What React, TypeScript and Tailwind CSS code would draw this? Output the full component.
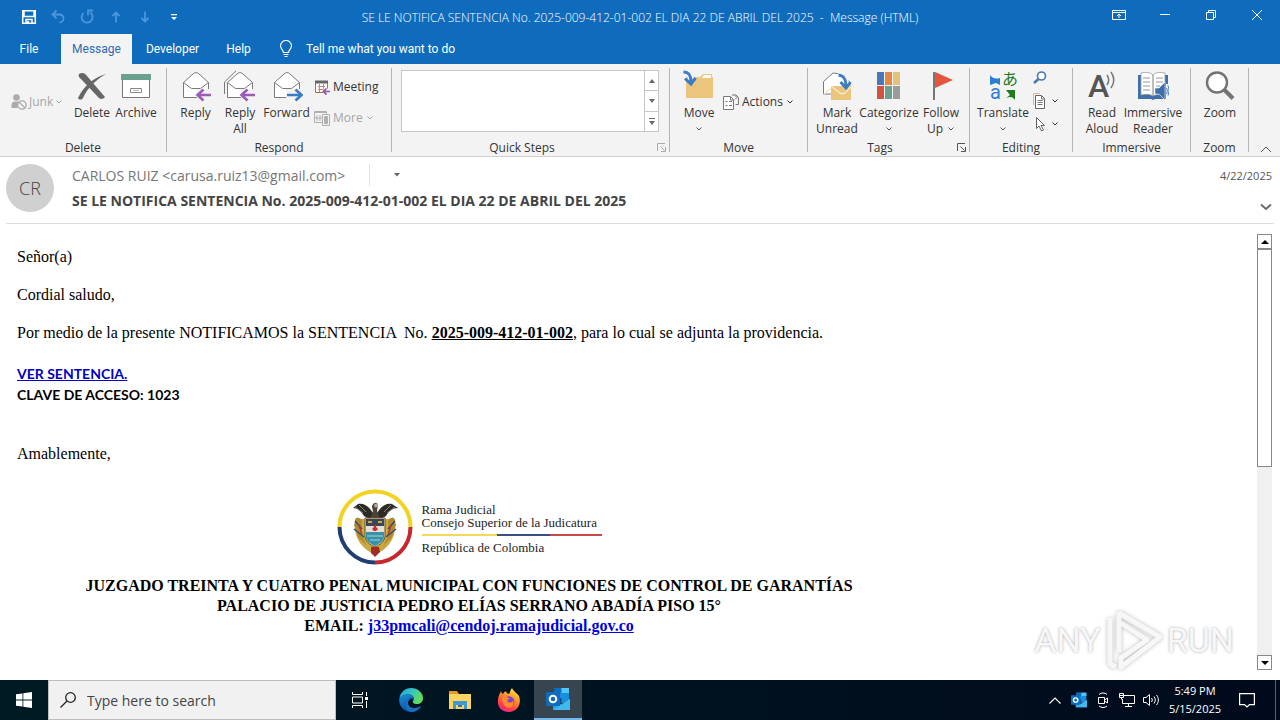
import type { ReactNode } from "react";

function ChevronDown({ className = "h-[6px] w-[8px]" }: { className?: string }) {
  return (
    <svg viewBox="0 0 8 6" className={className} fill="none" stroke="currentColor">
      <path d="M1.5 1.5 4 4l2.5-2.5" />
    </svg>
  );
}

function EnvelopeArrow({ kind }: { kind: "reply" | "replyAll" | "forward" }) {
  return (
    <svg viewBox="0 0 32 32" className="size-8" fill="none">
      {kind === "replyAll" && <path d="M.5 24V12L12 .8" stroke="#7a7a7a" />}
      <path d="M3.500 12.500 13 4c2-1.800 4-1.800 6 0l9.500 8.500v15h-25z" fill="#fff" stroke="#7a7a7a" />
      <path d="m3.500 12.500 8 6h9l8-6" stroke="#7a7a7a" />
      {kind === "forward" ? (
        <>
          <path d="M15 19h18v13H15z" fill="#f3f3f3" />
          <path d="M16 25h14M24.500 19.500l6 5.500-6 5.500" stroke="#3b7cc4" strokeWidth="2.600" />
        </>
      ) : (
        <>
          <path d="M17 19h15v13H17z" fill="#f3f3f3" />
          <path d="M31 25H18M23.500 19.500l-6 5.500 6 5.500" stroke="#9a5cb8" strokeWidth="2.600" />
        </>
      )}
    </svg>
  );
}

function DeleteIcon() {
  return (
    <svg viewBox="0 0 32 32" className="size-8" fill="#666">
      <path d="M3 4c3-2 6-1 8 2l18 21c-2 2.500-5 2.500-7 0L5 9C3 8 2 5 3 4z" />
      <path d="M30 4C21 9 12 17 7 28c-1 2-4 2-5 0C7 17 18 7 30 4z" />
    </svg>
  );
}

function ArchiveIcon() {
  return (
    <svg viewBox="0 0 32 32" className="size-8" fill="none">
      <path d="M2.500 9.500h27v18h-27z" fill="#fff" stroke="#777" />
      <path d="M1 4h30v6H1z" fill="#6ba08f" />
      <path d="M10.500 18.500h11v4h-11z" stroke="#888" />
      <path d="M13 20.500h6" stroke="#bbb" />
    </svg>
  );
}

function JunkIcon() {
  return (
    <svg viewBox="0 0 16 16" className="size-4" fill="#ababab">
      <circle cx="5.500" cy="3.500" r="3.300" />
      <path d="M.5 14V11c0-2 1.500-3.500 3.500-3.500h3L6.500 14z" />
      <circle cx="11" cy="11" r="4.200" fill="#f3f3f3" stroke="#ababab" strokeWidth="1.300" />
      <path d="m8 8 6 6" stroke="#ababab" strokeWidth="1.300" />
    </svg>
  );
}

function MeetingIcon() {
  return (
    <svg viewBox="0 0 16 16" className="size-4" fill="none">
      <path d="M1.500 3.500h12v10h-12z" fill="#fff" stroke="#b56c3c" />
      <path d="M1 1.500h13v3H1z" fill="#666" />
      <path d="M4 7.500h7M4 10.500h7M5.500 5v8M9.500 5v8" stroke="#c88a62" />
      <path d="M9.500 9.500H16V16H9.500z" fill="#f3f3f3" />
      <path d="M16 12.500H9.500m3-3-3 3 3 3" stroke="#8e55b0" strokeWidth="1.700" />
    </svg>
  );
}

function MoreIcon() {
  return (
    <svg viewBox="0 0 16 16" className="size-4" fill="none" stroke="#b0b0b0">
      <path d="M.5 2.500h12M.5 1.500h12v11H.5zM3 5v6M6 5v6M1 8h8" />
      <path d="M8.500 4.500h7v11h-7z" fill="#f3f3f3" />
      <path d="M10.500 6.500h3v7h-3z" fill="#b0b0b0" />
    </svg>
  );
}

function MoveIcon() {
  return (
    <svg viewBox="0 0 32 32" className="size-8" fill="none">
      <path d="M3 7h14l3-3h9v3h1v21H3z" fill="#eac57b" />
      <path d="m19 8 2-3h7v3z" fill="#fff" />
      <path d="M1.500 1.500C6 2 8.500 5 8.500 13" stroke="#f3f3f3" strokeWidth="6" />
      <path d="M.5 2C6 2 8 5 8 13M2 8.500l6 5.500 4.500-6" stroke="#3b7cc4" strokeWidth="3" />
    </svg>
  );
}

function ActionsIcon() {
  return (
    <svg viewBox="0 0 16 16" className="size-4" fill="none" stroke="#777">
      <path d="M.5 2.500h7l3 3v10H.5z" fill="#fff" />
      <path d="M2.500 7.500h2M6 7.500h3M2.500 11.500h2M6 11.500h3M9 1h4l2.500 2.500v7h-3M7.500 3v3h3" />
      <path d="M12 5.500 14 3.500 12 1.500" />
    </svg>
  );
}

function MarkUnreadIcon() {
  return (
    <svg viewBox="0 0 32 32" className="size-8" fill="none">
      <path d="M2.500 11.500 12 3l8 1 9 8v12h-26.500z" fill="#fff" stroke="#7a7a7a" />
      <path d="M10 16h20v14H10z" fill="#eac57b" />
      <path d="m3 24 7-6M10 16l9 7c2 1 3 1 5 0l6-6" stroke="#f7e7c6" strokeWidth="1.500" />
      <path d="M17 4c6 0 8 5 8 12" stroke="#f3f3f3" strokeWidth="6" />
      <path d="M17.500 5C23 5.500 25 9 25 17M19.500 12l5.500 6 4.500-6" stroke="#3b7cc4" strokeWidth="2.800" />
    </svg>
  );
}

const categoryColors = ["#4a78b4", "#e28a45", "#e5c27a", "#d05340", "#6ba08f", "#9b9b9b"];

function CategorizeIcon() {
  return (
    <svg viewBox="0 0 32 32" className="size-8">
      {categoryColors.map((color, i) => (
        <rect key={color} x={4 + (i % 3) * 8} y={i < 3 ? 2 : 16} width="7" height="13" fill={color} />
      ))}
    </svg>
  );
}

function FlagIcon() {
  return (
    <svg viewBox="0 0 32 32" className="size-8">
      <path d="M8 2h2v28H8z" fill="#777" />
      <path d="M10 2 28 10 10 18z" fill="#e4573d" />
    </svg>
  );
}

function TranslateIcon() {
  return (
    <div className="relative size-8">
      <svg viewBox="0 0 32 32" className="size-8">
        <path d="M3 5c3 4 6 4 10 3v7l-4-2-6 2z" fill="#2b7cd3" />
        <path d="M19 20h9v10c-2-3-5-4-9-2l4-3z" fill="#1e7b1e" />
      </svg>
      <span className="absolute right-[1px] top-0 font-['Noto_Sans_CJK_JP',sans-serif] text-[16px] leading-[16px] text-[#1e7b1e]">あ</span>
      <span className="absolute bottom-0 left-[3px] font-['Roboto',sans-serif] text-[20px] leading-[20px] text-[#2b7cd3]">a</span>
    </div>
  );
}

function ReadAloudIcon() {
  return (
    <div className="relative size-8">
      <span className="absolute left-[2px] top-0 font-['Roboto',sans-serif] text-[32px] font-medium leading-[32px] text-[#555]">A</span>
      <svg viewBox="0 0 32 32" className="absolute inset-0 size-8" fill="none" stroke="#777" strokeWidth="1.500">
        <path d="M21 5c2 3 2 7 0 10M25 2c3.500 5 3.500 11 0 16" />
      </svg>
    </div>
  );
}

function ImmersiveReaderIcon() {
  return (
    <svg viewBox="0 0 32 32" className="size-8" fill="none">
      <path d="M1 5h30v24H18l-2 1-2-1H1z" fill="#3f6fa8" />
      <path d="M4 3c5-1 9-1 12 2v21c-3-2-8-2-12-1zM28 3c-5-1-9-1-12 2v21c3-2 8-2 12-1z" fill="#fff" stroke="#999" strokeWidth=".8" />
      <path d="M6 8h7M6 12h7M6 16h7M6 20h7M19 8h7M19 12h7M19 16h4" stroke="#999" />
      <path d="M29 14h3v16h-3z" fill="#f3f3f3" />
      <path d="M18 18h4l6-6v18l-6-6h-4z" fill="#3f6fa8" stroke="#f3f3f3" strokeWidth=".6" />
      <path d="M29.500 18c1 2 1 4 0 6M31 15.500c1.300 3 1.300 7 0 10" stroke="#3b7cc4" />
    </svg>
  );
}

function ZoomIcon() {
  return (
    <svg viewBox="0 0 32 32" className="size-8" fill="none" stroke="#737373">
      <circle cx="13" cy="12.500" r="10" fill="#fff" strokeWidth="2.400" />
      <path d="m20 19.500 9 9" strokeWidth="4" />
    </svg>
  );
}

function RibbonButton({ icon, lines, width, dropdown }: { icon: ReactNode; lines: string[]; width: string; dropdown?: boolean }) {
  return (
    <button className={`flex h-[70px] shrink-0 flex-col items-center ${width}`}>
      {icon}
      <span className="mt-[3px] flex flex-col items-center whitespace-nowrap">
        {lines.map((line, i) => (
          <span key={line} className="flex h-4 items-center gap-1">
            {line}
            {dropdown && i === 1 && <ChevronDown className="h-[6px] w-[8px] text-[#555]" />}
          </span>
        ))}
        {dropdown && lines.length === 1 && (
          <span className="flex h-4 items-center">
            <ChevronDown className="h-[6px] w-[8px] text-[#555]" />
          </span>
        )}
      </span>
    </button>
  );
}

interface RibbonGroupProps {
  label: string;
  width: string;
  inset?: string;
  launcher?: boolean;
  faint?: boolean;
  children: ReactNode;
}

function RibbonGroup({ label, width, inset = "", launcher, faint, children }: RibbonGroupProps) {
  return (
    <section className={`relative my-1 flex shrink-0 flex-col border-r border-[#b5b5b5] ${width}`}>
      <div className={`flex h-[72px] shrink-0 pt-[2px] ${inset}`}>{children}</div>
      <div className={`flex h-4 shrink-0 items-center justify-center ${launcher ? "pr-[17px]" : ""}`}>{label}</div>
      {launcher && (
        <button aria-label={`${label} options`} className={`absolute bottom-0 right-[3px] ${faint ? "text-[#aaa]" : "text-[#555]"}`}>
          <svg viewBox="0 0 9 9" className="size-[9px]" fill="none" stroke="currentColor">
            <path d="M.5 8V.5H8M3.500 3.500l4 4M8.500 4v4.500H4" />
          </svg>
        </button>
      )}
    </section>
  );
}

function TitleBar() {
  return (
    <div className="grid h-[34px] grid-cols-[1fr_auto_1fr] items-center">
      <div className="flex items-center gap-[13px] pl-[21px] text-[#4b96dc]">
        <button aria-label="Save" className="text-white">
          <svg viewBox="0 0 16 16" className="size-4" fill="none" stroke="currentColor" strokeWidth="1.500">
            <path d="M1.700 1.700h12.600v12.600H1.700zM3 2v5.500h10V2" />
            <path d="M5 14v-3.500h6V14" />
            <path d="M6 12h2v3H6z" fill="currentColor" stroke="none" />
          </svg>
        </button>
        <button aria-label="Undo">
          <svg viewBox="0 0 16 16" className="size-4" fill="none" stroke="currentColor" strokeWidth="1.800">
            <path d="M6.500 1.500 2.500 5.500l4 4M3 5.500h6c3 0 4.500 2 4.500 4s-1.500 4-4 4" />
          </svg>
        </button>
        <button aria-label="Redo">
          <svg viewBox="0 0 16 16" className="size-4" fill="none" stroke="currentColor" strokeWidth="1.800">
            <path d="M11 3.500A5.500 5.500 0 1 1 4.500 4M9 6.500V1.500h5" />
          </svg>
        </button>
        <button aria-label="Previous item">
          <svg viewBox="0 0 16 16" className="size-4" fill="none" stroke="currentColor" strokeWidth="1.800">
            <path d="M8 13.500V3.500M4.500 7 8 3.500 11.500 7" />
          </svg>
        </button>
        <button aria-label="Next item">
          <svg viewBox="0 0 16 16" className="size-4" fill="none" stroke="currentColor" strokeWidth="1.800">
            <path d="M8 2.500v10M4.500 9 8 12.500 11.500 9" />
          </svg>
        </button>
        <button aria-label="Customize toolbar" className="text-white">
          <svg viewBox="0 0 16 16" className="size-4" fill="currentColor">
            <path d="M5 5h6v1.200H5zM5 8h6l-3 3z" />
          </svg>
        </button>
      </div>
      <h1 className="whitespace-pre pt-[2px] font-['Open_Sans',sans-serif] text-[12px] font-light text-white">
        SE LE NOTIFICA SENTENCIA No. 2025-009-412-01-002 EL DIA 22 DE ABRIL DEL 2025  -  Message (HTML)
      </h1>
      <div className="flex justify-end pb-[4px]">
        <button aria-label="Ribbon display options" className="flex h-7 w-[46px] items-center justify-center">
          <svg viewBox="0 0 14 12" className="h-3 w-[14px]" fill="none" stroke="currentColor">
            <path d="M.5 1.500h13v9H.5zM.5 3.500h13M7 9V5M5 7l2-2 2 2" />
          </svg>
        </button>
        <button aria-label="Minimize" className="flex h-7 w-[46px] items-center justify-center">
          <svg viewBox="0 0 10 10" className="size-[10px]" stroke="currentColor">
            <path d="M0 4.500h10" />
          </svg>
        </button>
        <button aria-label="Restore" className="flex h-7 w-[46px] items-center justify-center">
          <svg viewBox="0 0 10 10" className="size-[10px]" fill="none" stroke="currentColor">
            <path d="M.5 2.500h7v7h-7zM2.500 2.500v-2h7v7h-2" />
          </svg>
        </button>
        <button aria-label="Close" className="flex h-7 w-[46px] items-center justify-center">
          <svg viewBox="0 0 10 10" className="size-[10px]" stroke="currentColor">
            <path d="m0 0 10 10M10 0 0 10" />
          </svg>
        </button>
      </div>
    </div>
  );
}

function TabBar() {
  return (
    <nav className="flex h-[30px] items-stretch">
      <button className="w-[58px]">File</button>
      <button className="ml-[3px] w-[71px] bg-[#f3f3f3] text-[#2b6cb5]">Message</button>
      <button className="w-[81px]">Developer</button>
      <button className="w-[51px]">Help</button>
      <label className="ml-[15px] flex flex-1 items-center gap-[13px]">
        <svg viewBox="0 0 14 18" className="h-[18px] w-[14px]" fill="none" stroke="currentColor" strokeWidth="1.200">
          <path d="M4.500 12.500c0-2.500-3-3.500-3-6.500a5.500 5.500 0 0 1 11 0c0 3-3 4-3 6.500zM4.500 14.500h5M5.500 16.500h3" />
        </svg>
        <input aria-label="Tell me what you want to do" placeholder="Tell me what you want to do" className="w-60 bg-transparent placeholder:text-white placeholder:opacity-100 outline-none" />
      </label>
    </nav>
  );
}

function Ribbon() {
  return (
    <div className="flex h-[93px] border-b border-[#d0d0d0] bg-[#f3f3f3] text-[12px] leading-4 text-[#333]">
      <RibbonGroup label="Delete" width="w-[167px]">
        <button className="flex h-16 w-[68px] items-center gap-[2px] pl-[11px] text-[#a6a6a6]">
          <JunkIcon />
          Junk
          <ChevronDown className="h-[6px] w-[8px]" />
        </button>
        <RibbonButton icon={<DeleteIcon />} lines={["Delete"]} width="w-[48px]" />
        <RibbonButton icon={<ArchiveIcon />} lines={["Archive"]} width="w-[40px]" />
      </RibbonGroup>
      <RibbonGroup label="Respond" width="w-[225px]" inset="pl-[6px]">
        <RibbonButton icon={<EnvelopeArrow kind="reply" />} lines={["Reply"]} width="w-[45px]" />
        <RibbonButton icon={<EnvelopeArrow kind="replyAll" />} lines={["Reply", "All"]} width="w-[44px]" />
        <RibbonButton icon={<EnvelopeArrow kind="forward" />} lines={["Forward"]} width="w-[49px]" />
        <div className="ml-[3px] flex flex-col gap-[15px] pt-[9px]">
          <button className="flex h-4 items-center gap-[3px]">
            <MeetingIcon />
            Meeting
          </button>
          <button className="flex h-4 items-center gap-[3px] text-[#a6a6a6]">
            <MoreIcon />
            More
            <ChevronDown />
          </button>
        </div>
      </RibbonGroup>
      <RibbonGroup label="Quick Steps" width="w-[278px]" launcher faint>
        <div className="ml-[9px] flex h-[62px] w-[258px] border border-[#c6c6c6] bg-white text-[#666]">
          <div className="flex-1" />
          <div className="flex w-[14px] flex-col divide-y divide-[#c6c6c6] border-l border-[#c6c6c6]">
            <button aria-label="Previous row" className="flex flex-1 items-center justify-center">
              <svg viewBox="0 0 6 4" className="h-1 w-[6px]" fill="currentColor"><path d="M0 4h6L3 0z" /></svg>
            </button>
            <button aria-label="Next row" className="flex flex-1 items-center justify-center">
              <svg viewBox="0 0 6 4" className="h-1 w-[6px]" fill="currentColor"><path d="M0 0h6L3 4z" /></svg>
            </button>
            <button aria-label="All quick steps" className="flex flex-1 items-center justify-center">
              <svg viewBox="0 0 6 7" className="h-[7px] w-[6px]" fill="currentColor"><path d="M0 0h6v1H0zM0 3h6L3 7z" /></svg>
            </button>
          </div>
        </div>
      </RibbonGroup>
      <RibbonGroup label="Move" width="w-[138px]" inset="pl-[7px]">
        <RibbonButton icon={<MoveIcon />} lines={["Move"]} width="w-[44px]" dropdown />
        <button className="ml-[2px] flex h-16 items-center gap-[3px]">
          <ActionsIcon />
          Actions
          <ChevronDown />
        </button>
      </RibbonGroup>
      <RibbonGroup label="Tags" width="w-[162px]" inset="pl-[7px]" launcher>
        <RibbonButton icon={<MarkUnreadIcon />} lines={["Mark", "Unread"]} width="w-[44px]" />
        <RibbonButton icon={<CategorizeIcon />} lines={["Categorize"]} width="w-[60px]" dropdown />
        <RibbonButton icon={<FlagIcon />} lines={["Follow", "Up"]} width="w-[44px]" dropdown />
      </RibbonGroup>
      <RibbonGroup label="Editing" width="w-[103px]" inset="pl-[8px]">
        <RibbonButton icon={<TranslateIcon />} lines={["Translate"]} width="w-[50px]" dropdown />
        <div className="ml-[4px] flex flex-col gap-[7px]">
          <button aria-label="Find" className="flex h-4 items-center">
            <svg viewBox="0 0 16 16" className="size-4" fill="none" stroke="#4a78a8">
              <circle cx="9.500" cy="6" r="4" fill="#fff" strokeWidth="1.600" />
              <path d="m6.500 9-4.500 4" strokeWidth="2.500" />
            </svg>
          </button>
          <button aria-label="Related" className="flex h-4 items-center gap-[3px]">
            <svg viewBox="0 0 16 16" className="size-4" fill="none">
              <path d="M1.500 12V.5H8" stroke="#e6b98a" />
              <path d="M3.500 2.500h6l3 3v10h-9z" fill="#fff" stroke="#666" />
              <path d="M5.500 7.500h5M5.500 9.500h5M5.500 11.500h5M9.500 3v3h3" stroke="#777" />
            </svg>
            <ChevronDown />
          </button>
          <button aria-label="Select" className="flex h-4 items-center gap-[3px]">
            <svg viewBox="0 0 16 16" className="size-4" fill="#fff" stroke="#666">
              <path d="M4.500 1.500v11l2.500-2.500 2.500 5 2-1-2.500-4.500h3.500z" />
            </svg>
            <ChevronDown />
          </button>
        </div>
      </RibbonGroup>
      <RibbonGroup label="Immersive" width="w-[118px]" inset="pl-[7px]">
        <RibbonButton icon={<ReadAloudIcon />} lines={["Read", "Aloud"]} width="w-[44px]" />
        <RibbonButton icon={<ImmersiveReaderIcon />} lines={["Immersive", "Reader"]} width="w-[58px]" />
      </RibbonGroup>
      <RibbonGroup label="Zoom" width="w-[58px]" inset="pl-[7px]">
        <RibbonButton icon={<ZoomIcon />} lines={["Zoom"]} width="w-[44px]" />
      </RibbonGroup>
      <button aria-label="Collapse ribbon" className="ml-auto self-end pb-[3px] pr-[8px]">
        <svg viewBox="0 0 12 7" className="h-[7px] w-3" fill="none" stroke="#555"><path d="m1 6 5-5 5 5" /></svg>
      </button>
    </div>
  );
}

function MessageHeader() {
  return (
    <header className="mx-[6px] flex h-[67px] border-b border-[#dcdcdc] pt-[7px]">
      <div className="flex size-12 items-center justify-center rounded-full bg-[#d0d0d0] text-[18px] font-light text-[#444]">CR</div>
      <div className="ml-[18px] flex-1">
        <div className="flex h-[22px] items-center text-[14px] text-[#767676]">
          <span>CARLOS RUIZ &lt;carusa.ruiz13@gmail.com&gt;</span>
          <span className="ml-[24px] h-[22px] w-px bg-[#e1e1e1]" />
          <button aria-label="Sender options" className="ml-[24px]">
            <svg viewBox="0 0 6 4" className="h-[4px] w-[6px]" fill="#666"><path d="M0 0h6L3 3.500z" /></svg>
          </button>
        </div>
        <h2 className="mt-[4px] text-[14px] font-bold leading-[22px] text-[#444]">
          SE LE NOTIFICA SENTENCIA No. 2025-009-412-01-002 EL DIA 22 DE ABRIL DEL 2025
        </h2>
      </div>
      <div className="flex flex-col items-end pr-[2px] text-[11px] leading-[22px] text-[#555]">
        <time dateTime="2025-04-22" className="pt-[1px]">4/22/2025</time>
        <button aria-label="Expand header" className="mt-[16px]">
          <svg viewBox="0 0 12 8" className="h-2 w-3" fill="none" stroke="#666" strokeWidth="1.800"><path d="m1 1.500 5 4.500 5-4.500" /></svg>
        </button>
      </div>
    </header>
  );
}

function Emblem() {
  return (
    <svg viewBox="0 0 76 76" className="size-[76px] shrink-0" fill="none">
      <path d="M2.500 38a35.500 35.500 0 0 1 71 0" stroke="#f2d324" strokeWidth="4" />
      <path d="M2.500 38A35.500 35.500 0 0 0 38 73.500" stroke="#1f3f73" strokeWidth="4" />
      <path d="M73.500 38A35.500 35.500 0 0 1 38 73.500" stroke="#c6282e" strokeWidth="4" />
      <path d="M18 30h40v8c0 13-8 22-20 28C26 60 18 51 18 38z" fill="#c9a944" />
      <path d="M19 29c3-1 6 1 6 4l-1 12 6 12-9-9-4-12zM57 29c-3-1-6 1-6 4l1 12-6 12 9-9 4-12z" fill="#b08c2e" />
      <path d="M18 32l7 8M17 40l10 8M58 32l-7 8M59 40l-10 8" stroke="#2f4b7c" strokeWidth="1.500" />
      <path d="M22 36l3 10M54 36l-3 10" stroke="#b3382d" strokeWidth="1.500" />
      <path d="M36 24c-5-8-10-10-15-9l-5 4c5 0 8 3 11 8l9 5zM40 24c5-8 10-10 15-9l6 4c-6 0-9 3-12 8l-9 5z" fill="#2e2a26" />
      <path d="m18 18 8 6M22 16l7 7M58 18l-8 6M54 16l-7 7" stroke="#8b8377" />
      <path d="M35 18c0-4 5-6 6-2l-1 6 3 8H33l3-8z" fill="#4b433a" />
      <circle cx="39" cy="16.500" r="2" fill="#b8aa93" />
      <path d="M28 29h20v18c0 5-5 9-10 11-5-2-10-6-10-11z" fill="#e7dcc0" stroke="#6b5420" />
      <path d="M29 30h18v7H29z" fill="#38465c" />
      <path d="M31 33h4M41 33h4" stroke="#d5a83a" strokeWidth="2" />
      <path d="M29 37h18v6H29z" fill="#e5dfd5" />
      <path d="M38 36v6M35.500 40h5" stroke="#c03030" strokeWidth="2.500" />
      <path d="M29 43h18v5c0 4-5 7-9 9-4-2-9-5-9-9z" fill="#3791a8" />
      <path d="M30 47h16M33 51h10" stroke="#a8d4d8" />
      <path d="M34 58h8l1 5-5 5-4-4z" fill="#a02c28" />
    </svg>
  );
}

function MessageBody() {
  return (
    <article className="w-[921px] pl-[17px] pt-[23px] font-['Liberation_Serif',serif] text-[16px] leading-[19px] text-black">
      <p>Señor(a)</p>
      <p className="mt-[19px]">Cordial saludo,</p>
      <p className="mt-[19px] whitespace-pre-wrap">
        Por medio de la presente NOTIFICAMOS la SENTENCIA  No. <b className="underline">2025-009-412-01-002</b>, para lo cual se adjunta la providencia.
      </p>
      <p className="mt-[21px] font-['Lato',sans-serif] text-[14px] font-bold leading-[21px]">
        <a href="#sentencia" className="text-[#0000c0] underline">VER SENTENCIA.</a>
        <br />
        CLAVE DE ACCESO: 1023
      </p>
      <p className="mt-[39px]">Amablemente,</p>
      <div className="mt-[26px] flex items-center justify-center gap-[9px] pb-[2px]">
        <Emblem />
        <div className="w-[180px] whitespace-nowrap pt-[2px] text-[13px] leading-[13px] text-[#222]">
          <p>Rama Judicial</p>
          <p>Consejo Superior de la Judicatura</p>
          <div className="my-[5px] flex h-[2px]">
            <span className="w-[75px] bg-[#f2d95a]" />
            <span className="w-[53px] bg-[#3a4f86]" />
            <span className="flex-1 bg-[#c8484c]" />
          </div>
          <p>República de Colombia</p>
        </div>
      </div>
      <div className="mt-[9px] text-center font-bold leading-[20px]">
        <p>JUZGADO TREINTA Y CUATRO PENAL MUNICIPAL CON FUNCIONES DE CONTROL DE GARANTÍAS</p>
        <p>PALACIO DE JUSTICIA PEDRO ELÍAS SERRANO ABADÍA PISO 15°</p>
        <p>
          EMAIL: <a href="mailto:j33pmcali@cendoj.ramajudicial.gov.co" className="text-[#0000e0] underline">j33pmcali@cendoj.ramajudicial.gov.co</a>
        </p>
      </div>
    </article>
  );
}

function Scrollbar() {
  return (
    <div className="mb-[10px] mr-[8px] mt-[10px] flex w-[15px] flex-col bg-[#f0f0f0]">
      <button aria-label="Scroll up" className="flex h-[15px] items-center justify-center border border-[#888] bg-white">
        <svg viewBox="0 0 8 4" className="h-1 w-2"><path d="M0 4h8L4 0z" /></svg>
      </button>
      <div className="h-[218px] border border-[#888] bg-white" />
      <button aria-label="Scroll down" className="mt-auto flex h-[15px] items-center justify-center border border-[#888] bg-white">
        <svg viewBox="0 0 8 4" className="h-1 w-2"><path d="M0 0h8L4 4z" /></svg>
      </button>
    </div>
  );
}

function Watermark() {
  return (
    <div className="pointer-events-none absolute bottom-[8px] right-[46px] flex items-center gap-[4px] font-['Roboto',sans-serif] text-[34px] leading-[60px] text-[#f7f7f7] [text-shadow:0_0_3px_#aaa]">
      <span>ANY</span>
      <svg viewBox="0 0 58 64" className="h-16 w-[58px] drop-shadow-[0_0_2px_#bbb]" fill="none" stroke="#f7f7f7" strokeWidth="5" strokeLinejoin="round">
        <path d="M14 4v40M14 5l41 24-39 30v-9l26-18-26-17M5 10v46l6 3" />
      </svg>
      <span>RUN</span>
    </div>
  );
}

function OutlookIcon({ className }: { className: string }) {
  return (
    <svg viewBox="0 0 24 24" className={className}>
      <path d="M8 1h15v15H8z" fill="#1490df" />
      <path d="M8 1h7.500v5H8z" fill="#0f6cbd" />
      <path d="M15.500 1H23v5h-7.500z" fill="#50c8f5" />
      <path d="M8 11h7.500v5H8z" fill="#0a4f96" />
      <path d="M7 13l9 5 8-6v11H7z" fill="#2aa5e8" />
      <path d="m7 23 17-11v11z" fill="#41b8f0" />
      <rect y="5" width="14" height="14" rx="1" fill="#0f6cbd" />
      <circle cx="7" cy="12" r="3.300" fill="none" stroke="#fff" strokeWidth="2" />
    </svg>
  );
}

function Taskbar() {
  return (
    <footer className="flex h-10 shrink-0 bg-linear-to-r from-[#001a23] to-[#000a1c] text-white">
      <button aria-label="Start" className="flex w-12 items-center justify-center">
        <svg viewBox="0 0 16 16" className="size-4" fill="#fff">
          <path d="M0 2.300 6.500 1.400v6.200H0zM7.300 1.300 16 0v7.600H7.300zM0 8.400h6.500v6.200L0 13.700zM7.300 8.400H16V16l-8.700-1.300z" />
        </svg>
      </button>
      <label className="flex w-72 items-center gap-[11px] border border-[#bdbdbd] bg-[#f1f1f1] pl-[11px]">
        <svg viewBox="0 0 16 16" className="size-4" fill="none" stroke="#222" strokeWidth="1.300">
          <circle cx="10.500" cy="5.500" r="4.800" />
          <path d="M7 9 .5 15.500" />
        </svg>
        <input aria-label="Search" placeholder="Type here to search" className="w-60 bg-transparent text-[14px] outline-none placeholder:text-[#444] placeholder:opacity-100" />
      </label>
      <button aria-label="Task view" className="flex w-12 items-center justify-center">
        <svg viewBox="0 0 16 16" className="size-4" fill="none" stroke="#fff">
          <path d="M.5 0v2.500h10V0M.5 5h10v6H.5zM.5 16v-2.500h10V16M14.500 0v4M14.500 9v7" />
          <path d="M13 5h3v3h-3z" fill="#fff" stroke="none" />
        </svg>
      </button>
      <div className="ml-[3px] flex gap-px">
        <button aria-label="Edge" className="flex w-12 items-center justify-center">
          <svg viewBox="0 0 24 24" className="size-6">
            <defs>
              <linearGradient id="edgeTop" x1="0" y1="0" x2="1" y2="0.400">
                <stop offset="0" stopColor="#2a9fe0" />
                <stop offset="0.500" stopColor="#33c2c8" />
                <stop offset="1" stopColor="#63dc5c" />
              </linearGradient>
              <linearGradient id="edgeBody" x1="0" y1="0" x2="0.500" y2="1">
                <stop offset="0" stopColor="#1b8fdb" />
                <stop offset="1" stopColor="#0b4c9e" />
              </linearGradient>
            </defs>
            <path d="M.3 11C1 4.500 6 0 12 0c7 0 12 5 12 10 0 4-3 6-6 6-3.500 0-5-1.500-4-3 2-3 0-6-4-6.500C6 6 2 8 .3 11z" fill="url(#edgeTop)" />
            <path d="M.3 11C2 8 6 6 10 6.500c3 .4 5 2.500 4.500 4.500C13 9 8 11 9 16c1 4 6 6 13 2-2 4-6 6-10 6C5 24-.5 18 .3 11z" fill="url(#edgeBody)" />
            <path d="M9 16c1 4 6 6 13 2-2 4-6 6-10 6-4-1-6.500-5-5-9 1-3 5-5 7.500-4C10 11 8.500 13 9 16z" fill="#186fc0" />
          </svg>
        </button>
        <button aria-label="File Explorer" className="flex w-12 items-center justify-center">
          <svg viewBox="0 0 24 24" className="size-6">
            <path d="M1 3h8l2 3h11v3H1z" fill="#e59a1c" />
            <path d="M1 6h22v15H1z" fill="#fcd462" />
            <path d="M5 13h14v8h-3v-4H8v4H5z" fill="#3f98d0" />
            <path d="M10 17h4v2h-4z" fill="#2b78b5" />
          </svg>
        </button>
        <button aria-label="Firefox" className="flex w-12 items-center justify-center">
          <svg viewBox="0 0 24 24" className="size-6">
            <defs>
              <linearGradient id="fox" x1="0.800" y1="0" x2="0.300" y2="1">
                <stop offset="0" stopColor="#fff04a" />
                <stop offset="0.400" stopColor="#ff9524" />
                <stop offset="0.800" stopColor="#ff3750" />
                <stop offset="1" stopColor="#e82a8a" />
              </linearGradient>
            </defs>
            <path d="M4 3c.3 1.500 1 2.500 2 3 1-2 2-2.500 3-2.500C9.500 5 11 6 12 6c1-1 1-4 3-6 1 3 5 5 7 8 3 8-2 16-10 16S-1 18 1.500 9C2 6 3.500 5 4 3z" fill="url(#fox)" />
            <circle cx="12" cy="13.500" r="5.300" fill="#7a42d0" />
            <path d="M5 10c3-2 6-1 8 1-2 0-3 1-2.500 2.500 2 2 5 1 5.500-1 2 5-2 8-5.500 7C7 18.500 5 14 5 10z" fill="#ff8a2c" />
          </svg>
        </button>
        <button aria-label="Outlook" className="flex w-12 items-center justify-center border-b-2 border-[#76b9ed] bg-[#36454f]">
          <OutlookIcon className="size-6" />
        </button>
      </div>
      <div className="ml-auto flex items-center">
        <button aria-label="Show hidden icons" className="flex w-6 justify-center">
          <svg viewBox="0 0 12 7" className="h-[7px] w-3" fill="none" stroke="#fff" strokeWidth="1.200"><path d="m.5 6.500 5.500-5.500 5.500 5.500" /></svg>
        </button>
        <button aria-label="Outlook notifications" className="flex w-6 justify-center"><OutlookIcon className="size-4" /></button>
        <button aria-label="Meet now" className="flex w-6 justify-center">
          <svg viewBox="0 0 16 16" className="size-4" fill="none" stroke="#fff">
            <path d="M3.500 5.500h6v6h-6zM9.500 8l3-2v5l-3-2M4 2.500c2.500-2 5.500-2 8 0M4 14c2.500 2 5.500 2 8 0" />
          </svg>
        </button>
        <button aria-label="Network" className="flex w-6 justify-center">
          <svg viewBox="0 0 16 16" className="size-4" fill="none" stroke="#fff">
            <path d="M4.500 3.500h11v8H3.500V7M9.500 11.500v3M6 14.500h7M.5 1.500h4v4h-4zM2.500 5.500v2M1 3.500h3" />
          </svg>
        </button>
        <button aria-label="Volume" className="flex w-6 justify-center">
          <svg viewBox="0 0 16 16" className="size-4" fill="none" stroke="#fff">
            <path d="M.5 5.500H3l3.500-3v11l-3.500-3H.5zM8.500 6c1 1.300 1 2.700 0 4M11 4.500c1.700 2.300 1.700 4.700 0 7M13.500 3c2.500 3.200 2.500 6.800 0 10" />
          </svg>
        </button>
        <div className="flex w-[64px] flex-col items-center text-[11px] leading-[18px]">
          <time>5:49 PM</time>
          <time>5/15/2025</time>
        </div>
        <button aria-label="Notifications" className="flex w-[40px] justify-center">
          <svg viewBox="0 0 16 16" className="size-4" fill="none" stroke="#fff" strokeWidth="1.200">
            <path d="M.6 1.600h14.800v11H10.500L8 15l-2.500-2.400H.6z" />
          </svg>
        </button>
        <span className="ml-[8px] mr-[4px] h-10 w-px bg-[#5a6370]" />
      </div>
    </footer>
  );
}

export default function App() {
  return (
    <div className="flex h-screen flex-col overflow-hidden bg-white font-['Open_Sans','Noto_Sans_CJK_JP',sans-serif]">
      <div className="bg-[#0f6cbd] font-['Roboto',sans-serif] text-[12px] text-white">
        <TitleBar />
        <TabBar />
      </div>
      <Ribbon />
      <MessageHeader />
      <main className="relative flex min-h-0 flex-1 justify-between">
        <MessageBody />
        <Scrollbar />
        <Watermark />
      </main>
      <Taskbar />
    </div>
  );
}
